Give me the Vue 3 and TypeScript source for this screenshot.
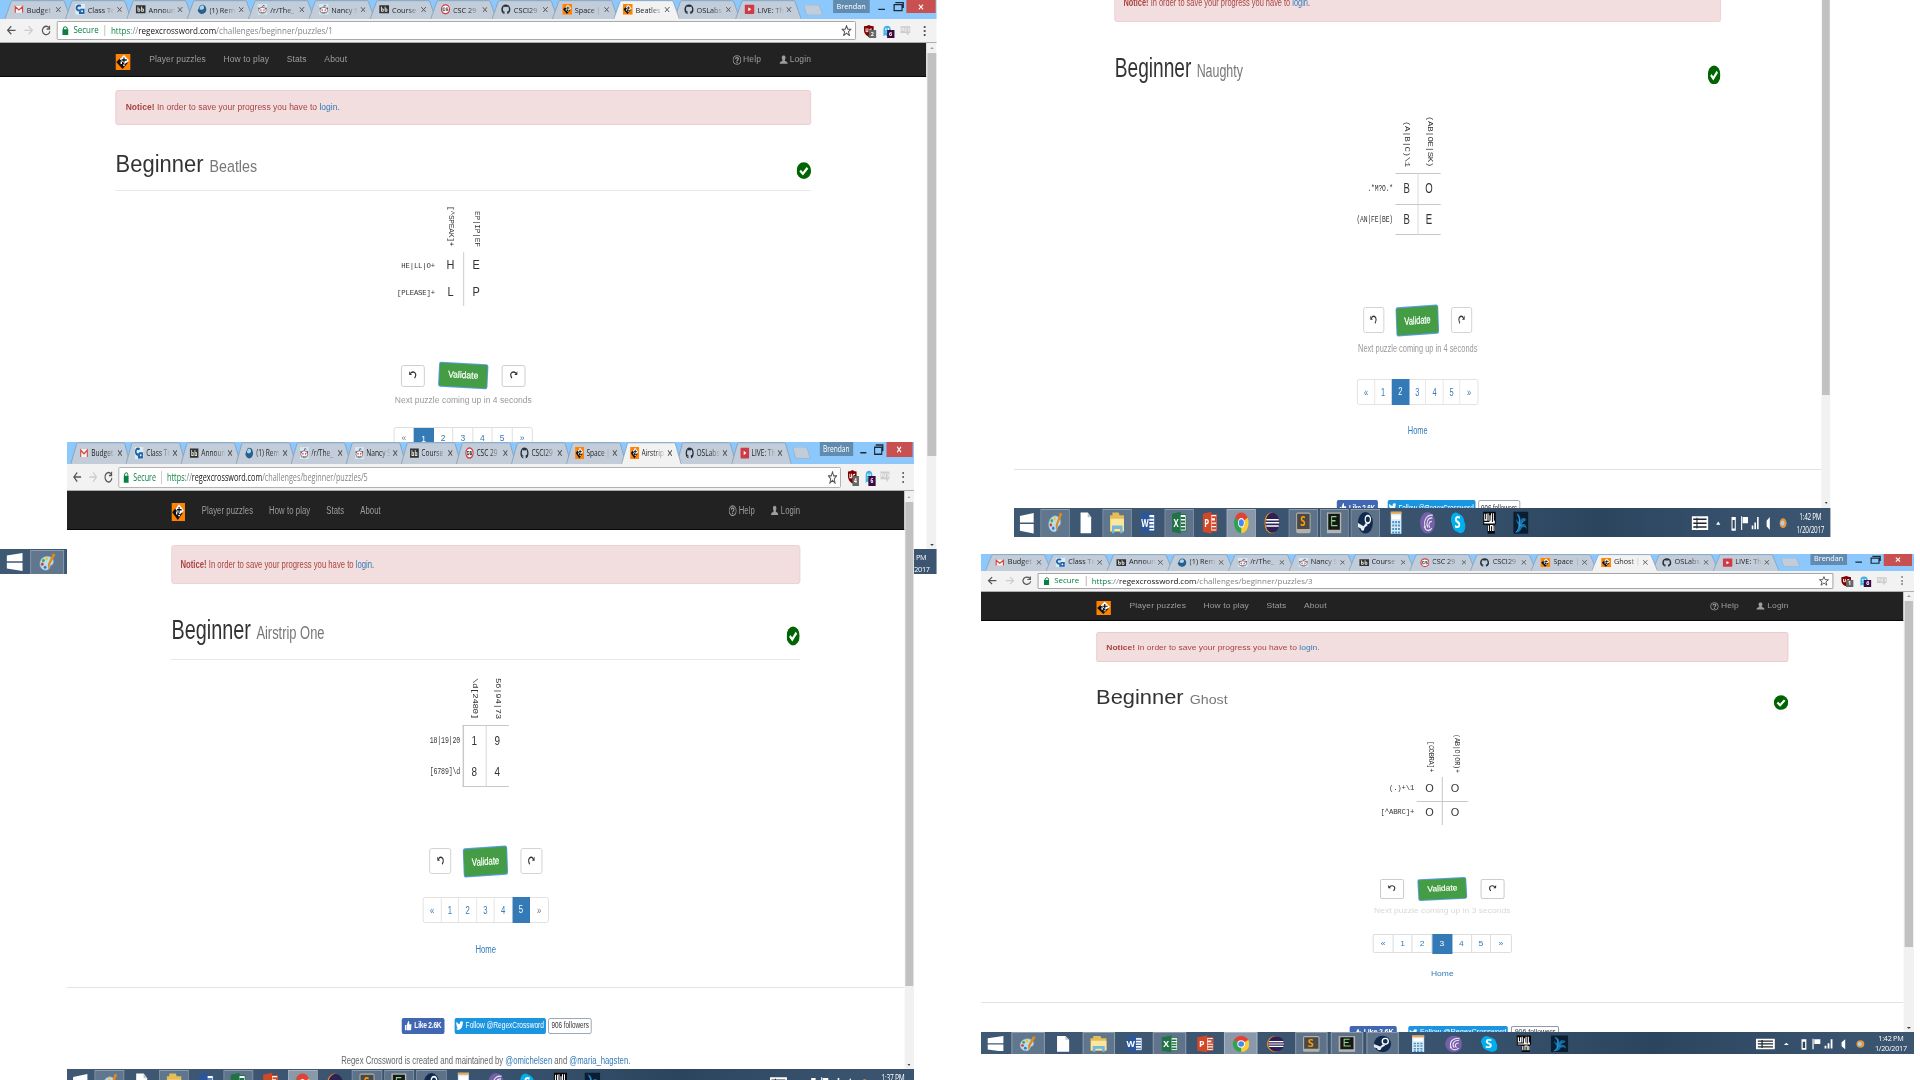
<script setup lang="ts">
interface Shot {
  id: string
  left: number
  top: number
  width: number
  height: number
  shift: number
  sx: number
  sy: number
  name: string
  tab: string
  page: number
  cols: string[]
  rows: string[]
  cells: string[][]
  lines: string[]
  rule: boolean
  seconds: number | null
  faded: boolean
  tilt: number
  thumb: number
  badge: string
  time: string
}

const shots: Shot[] = [
  {
    id: 'beatles', left: 0, top: 0, width: 937, height: 574, shift: 0, sx: 0.61, sy: 0.6663,
    name: 'Beatles', tab: 'Beatles', page: 1,
    cols: ['[^SPEAK]+', 'EP|IP|EF'], rows: ['HE|LL|O+', '[PLEASE]+'],
    cells: [['H', 'E'], ['L', 'P']], lines: ['mv'], rule: true, seconds: 4, faded: false,
    tilt: 3, thumb: 604, badge: '2', time: '1:42 PM',
  },
  {
    id: 'airstrip', left: 67, top: 442, width: 847, height: 638, shift: 0, sx: 0.5514, sy: 0.761,
    name: 'Airstrip One', tab: 'Airstrip', page: 5,
    cols: ['\\d[2480]', '56|94|73'], rows: ['18|19|20', '[6789]\\d'],
    cells: [['1', '9'], ['8', '4']], lines: ['mv', 'lv', 'th', 'bh'], rule: true, seconds: null, faded: false,
    tilt: -3, thumb: 635, badge: '4', time: '1:37 PM',
  },
  {
    id: 'naughty', left: 1014, top: 0, width: 817, height: 537, shift: -120.3, sx: 0.5316, sy: 0.7625,
    name: 'Naughty', tab: 'Naughty', page: 2,
    cols: ['(A|B|C)\\1', '(AB|OE|SK)'], rows: ['.*M?O.*', '(AN|FE|BE)'],
    cells: [['B', 'O'], ['B', 'E']], lines: ['mv', 'th', 'mh', 'bh'], rule: false, seconds: 4, faded: false,
    tilt: -3, thumb: 596, badge: '2', time: '1:42 PM',
  },
  {
    id: 'ghost', left: 981, top: 554, width: 933, height: 500, shift: 0, sx: 0.6074, sy: 0.58,
    name: 'Ghost', tab: 'Ghost |', page: 3,
    cols: ['[COBRA]+', '(AB|O|OR)+'], rows: ['(.)+\\1', '[^ABRC]+'],
    cells: [['O', 'O'], ['O', 'O']], lines: ['mv', 'mh'], rule: false, seconds: 3, faded: true,
    tilt: -3, thumb: 596, badge: '1', time: '1:42 PM',
  },
]

const tabsFor = (s: Shot) => [
  { icon: 'gmail', label: 'Budget' },
  { icon: 'ca', label: 'Class To' },
  { icon: 'bb', label: 'Announ' },
  { icon: 'globe', label: '(1) Rem' },
  { icon: 'reddit', label: '/r/The_' },
  { icon: 'reddit', label: 'Nancy S' },
  { icon: 'bb', label: 'Course' },
  { icon: 'cs', label: 'CSC 29' },
  { icon: 'github', label: 'CSCI29' },
  { icon: 'regex', label: 'Space |' },
  { icon: 'regex', label: s.tab, active: true },
  { icon: 'github', label: 'OSLabs' },
  { icon: 'youtube', label: 'LIVE: Th' },
]

const apps = [
  { icon: 'paint', open: true }, { icon: 'file' }, { icon: 'folder', open: true }, { icon: 'word' },
  { icon: 'excel', open: true }, { icon: 'ppt' }, { icon: 'chrome', open: true, focus: true }, { icon: 'eclipse' },
  { icon: 'sublime', open: true }, { icon: 'term', open: true }, { icon: 'steam', open: true }, { icon: 'calc' },
  { icon: 'torrent' }, { icon: 'skype' }, { icon: 'pixel' }, { icon: 'bird' },
] as { icon: string; open?: boolean; focus?: boolean }[]

const clueSpace = (s: Shot) => Math.max(...s.cols.map(c => c.length)) * 6.6
</script>

<template>
  <main class="board">
    <svg width="0" height="0" class="defs">
      <symbol id="gmail" viewBox="0 0 16 16"><path fill="#f4f4f4" d="M1 3h14v10H1z" /><path fill="none" stroke="#d8453a" stroke-width="2" d="M2 13V4l6 5 6-5v9" /></symbol>
      <symbol id="ca" viewBox="0 0 16 16"><path fill="#dcebf8" d="M0 0h16v16H0z" /><path fill="none" stroke="#1d62a8" stroke-width="3" d="M9 3C5 1 2 3 2 6s3 5 6 3" /><path fill="#1d62a8" d="M8 7h7v8H6v-4h2z" /><circle cx="11" cy="11" r="1.5" fill="#fff" /></symbol>
      <symbol id="bb" viewBox="0 0 16 16"><path fill="#2c3338" d="M0 2h16v12H0z" /><path fill="none" stroke="#e8e0c8" stroke-width="1.5" d="M3.500 4v7h3V7.500h-3M9.500 4v7h3V7.500h-3" /></symbol>
      <symbol id="globe" viewBox="0 0 16 16"><path fill="#2a5f8c" d="M8 1c5 0 7 4 7 7 0 5-4 7-7 7S1 12 1 9c2-1 2-8 7-8z" /><path fill="#a7d4ee" d="M8 2c3 0 4 3 3 5-2 2-6 2-7 0 0-3 2-5 4-5z" /></symbol>
      <symbol id="reddit" viewBox="0 0 16 16"><path fill="#d5e6f5" d="M0 0h16v16H0z" /><ellipse cx="8" cy="9.500" rx="6.300" ry="4.500" fill="#fff" stroke="#444" /><circle cx="5.500" cy="9" r="1.300" fill="#f33" /><circle cx="10.500" cy="9" r="1.300" fill="#f33" /><path fill="none" stroke="#444" d="M5 12q3 1.500 6 0M8 5l1-3 3 1" /><circle cx="2" cy="6.500" r="1.200" fill="#555" /><circle cx="14" cy="6.500" r="1.200" fill="#555" /></symbol>
      <symbol id="cs" viewBox="0 0 16 16"><circle cx="8" cy="8" r="6.600" fill="#fff" stroke="#d43c47" stroke-width="2" /><path fill="none" stroke="#555" stroke-width="1.500" d="M7 6H4v4h3V8M12 6H9v2h3v2H9" /></symbol>
      <symbol id="github" viewBox="0 0 16 16"><path fill="#24303c" d="M8 .6a7.500 7.500 0 0 0-2.400 14.600V13c-2 .4-2.500-1-2.500-1 1 0 1.200 1 2.600.7.100-.6.300-.9.600-1.200-1.700-.3-3.300-1-3.300-3.800 0-.8.300-1.500.8-2-.1-.3-.3-1 .1-2 0 0 .7-.2 2.100.8a7 7 0 0 1 4 0c1.400-1 2-.8 2-.8.500 1 .2 1.700.1 2 .5.500.8 1.200.8 2 0 2.800-1.700 3.500-3.300 3.700.3.300.5.700.5 1.500v2.300A7.500 7.500 0 0 0 8 .6z" /></symbol>
      <symbol id="regex" viewBox="0 0 16 16"><path fill="#ff8200" d="M0 0h16v16H0z" /><path fill="#111" d="M6.500 3 13 9l-5.500 6L1 8z" /><path fill="#fff" d="m9 1 5.500 5.500L10 10 4.500 5z" /><path fill="none" stroke="#111" stroke-width="1.300" d="M9 3.500v5M6.500 6h5.500" /><path fill="#fff" d="M5.500 7.500H7V10H5.500zM8 10.500h2v1.200H8z" /></symbol>
      <symbol id="youtube" viewBox="0 0 16 16"><rect y="1" width="16" height="14" rx="1.500" fill="#cf3a45" /><path fill="#fff" d="m6 5 5 3-5 3z" /></symbol>
      <symbol id="shield" viewBox="0 0 18 18"><path fill="#800000" d="M9 0q4 2 8 2v6c0 5-4 8-8 10-4-2-8-5-8-10V2q4 0 8-2z" /><path fill="none" stroke="#fff" stroke-width="1.500" d="M4.500 5v5h3V5M14 6q-4-1-4 3 0 2 3 2V9" /></symbol>
      <symbol id="ghostie" viewBox="0 0 18 18"><path fill="#40b4e5" d="M3 17V7a6 6 0 0 1 12 0v10l-3-2-3 2-3-2z" /><path fill="#fff" d="M6 5h2v3H6zM10 5h2v3h-2zM6 10h6v1H6z" /></symbol>
      <symbol id="chat" viewBox="0 0 18 18"><path fill="#ccc" d="M1 2h16v10h-3v4l-4-4H1z" /><path stroke="#fff" fill="none" d="M3 9V5h3v4M8 5h3L8 9h3M13 5h2v4h-2" /></symbol>
      <symbol id="undo" viewBox="0 0 16 16"><path fill="none" stroke="#333" stroke-width="2" d="M4 5q4-3 7-1c3 2 2 6 0 9" /><path fill="#333" d="M1.500 2v6h5z" /></symbol>
      <symbol id="tick" viewBox="0 0 24 24"><circle cx="12" cy="12" r="12" fill="#006400" /><path fill="none" stroke="#fff" stroke-width="3.600" d="m6 12 4.500 4.500L18 8" /></symbol>
      <symbol id="help" viewBox="0 0 16 16"><circle cx="8" cy="8" r="6.800" fill="none" stroke="#9d9d9d" stroke-width="1.500" /><path fill="none" stroke="#9d9d9d" stroke-width="2" d="M5.500 6.500C5.500 3.500 10.500 3.500 10.500 6.200 10.500 8 8 8 8 10M8 11v2" /></symbol>
      <symbol id="user" viewBox="0 0 16 16"><path fill="#9d9d9d" d="M8 1c4 0 4 4 2 7.500 0 2 5 1.500 5 5.500H1c0-4 5-3.500 5-5.500C4 5 4 1 8 1z" /></symbol>
      <symbol id="paint" viewBox="0 0 32 32"><path fill="#b9dcee" stroke="#7ba7c1" d="M14 6c9-1 15 5 13 11-1 4-5 3-6 6-1 4-4 7-9 6C5 28 1 22 3 15c1-5 6-8 11-9z" /><circle cx="9" cy="13" r="2.500" fill="#43a643" /><circle cx="15" cy="10" r="2.500" fill="#f4c22b" /><circle cx="7" cy="19" r="2.500" fill="#d93c31" /><circle cx="12" cy="24" r="2.500" fill="#3a74c4" /><path fill="#e08a1e" d="m26 1 5 2-9 15-4 11-1-10z" /></symbol>
      <symbol id="file" viewBox="0 0 32 32"><path fill="#fff" d="M5 1h15l7 7v23H5z" /><path fill="#bcc4cc" d="M20 1v7h7z" /></symbol>
      <symbol id="folder" viewBox="0 0 32 32"><path fill="#e4bd57" d="M1 5h5V1h13l2 4h9v24H1z" /><path fill="#fbe8a0" d="M2 10h28v18H2z" /><path fill="#75b8dc" d="M5 20h22v11h-5v-6H10v6H5z" /></symbol>
      <symbol id="word" viewBox="0 0 32 32"><path fill="#fff" stroke="#2b579a" stroke-width="1.500" d="M16 4h14v24H16z" /><path stroke="#2b579a" stroke-width="2" d="M18 9h10M18 14h10M18 19h10M18 24h10" /><path fill="#2b579a" d="M1 3 19 0v32L1 29z" /><text x="2" y="22" class="glyph" fill="#fff">W</text></symbol>
      <symbol id="excel" viewBox="0 0 32 32"><path fill="#fff" stroke="#217346" stroke-width="1.500" d="M16 4h14v24H16z" /><path stroke="#217346" stroke-width="3" d="M19 9h9M19 14h9M19 19h9M19 24h9" /><path fill="#217346" d="M1 3 19 0v32L1 29z" /><text x="4" y="22" class="glyph" fill="#fff">X</text></symbol>
      <symbol id="ppt" viewBox="0 0 32 32"><path fill="#fff" stroke="#d24726" stroke-width="1.500" d="M16 4h14v24H16z" /><path stroke="#d24726" stroke-width="3" d="M20 8h8v6h-8M20 19h9M20 24h9" fill="none" /><path fill="#d24726" d="M1 3 19 0v32L1 29z" /><text x="4" y="22" class="glyph" fill="#fff">P</text></symbol>
      <symbol id="chrome" viewBox="0 0 32 32"><path fill="#e34133" d="M16 16 3 8.500A15 15 0 0 1 29 8.500z" /><path fill="#2fa24f" d="M16 16v15A15 15 0 0 1 3 8.500z" /><path fill="#fccd32" d="M16 16 29 8.500A15 15 0 0 1 16 31z" /><circle cx="16" cy="16" r="7" fill="#fff" /><circle cx="16" cy="16" r="5.300" fill="#4886f0" /></symbol>
      <symbol id="eclipse" viewBox="0 0 32 32"><circle cx="15" cy="16" r="15" fill="#ee8d22" /><circle cx="17" cy="16" r="14.500" fill="#2c2255" /><path stroke="#fff" stroke-width="2.300" d="M4 11.500h26M3 16h28M4 20.500h26" /></symbol>
      <symbol id="sublime" viewBox="0 0 32 32"><rect x="1" y="1" width="30" height="30" rx="3" fill="#b3b2a9" /><path fill="#494949" d="M3 3h26v22H3z" /><text x="9.500" y="21" class="glyph big" fill="#ff9800">S</text></symbol>
      <symbol id="term" viewBox="0 0 32 32"><rect x="1" y="1" width="30" height="30" fill="#b4b4b0" /><path fill="#151815" d="M4 3h24v23H4z" /><path fill="none" stroke="#8ed58c" stroke-width="2" d="M21 7H11v13h12M12 13h7" /></symbol>
      <symbol id="steam" viewBox="0 0 32 32"><circle cx="16" cy="16" r="15.500" fill="#102b4e" /><circle cx="21" cy="11" r="5.500" fill="none" stroke="#fff" stroke-width="2.500" /><path fill="#e9eef4" d="m0 16 12 5 5-5 4 3-7 4c0 6-7 6-8 1l-6-2z" /></symbol>
      <symbol id="calc" viewBox="0 0 32 32"><path fill="#d8ebf6" d="M5 0h22v32H5z" /><path fill="#eda44c" d="M5 0h22v3H5z" /><path fill="#fff" d="M7 5h18v6H7z" /><path stroke="#4b92c9" stroke-width="3" stroke-dasharray="4 2" d="M8 15h16M8 20h16M8 25h16M8 30h16" /></symbol>
      <symbol id="torrent" viewBox="0 0 32 32"><circle cx="16" cy="16" r="15.500" fill="#7661a8" /><path fill="none" stroke="#eee8fa" stroke-width="2" d="M27 5C12 4 7 15 12 23M26 9C16 8 12 17 17 23M25 14c-6 0-8 5-4 9M9 21c3 7 11 8 16 3" /></symbol>
      <symbol id="skype" viewBox="0 0 32 32"><circle cx="11" cy="11" r="10" fill="#00aff0" /><circle cx="21" cy="21" r="10" fill="#00aff0" /><circle cx="16" cy="16" r="13" fill="#00aff0" /><text x="8.500" y="24" class="glyph skype" fill="#fff">S</text></symbol>
      <symbol id="pixel" viewBox="0 0 32 32"><path fill="#080808" d="M3 0h26v18h-2v14H12V19H3z" /><path fill="none" stroke="#fff" stroke-width="2" d="M6 3v9h4V3M13 2v11M17 5v9h3V2M24 2v12h3M5 16h22M14 20v8M18 28v-8h4v8M25 20v8" /></symbol>
      <symbol id="bird" viewBox="0 0 32 32"><path fill="#0b1d31" d="M0 0h32v32H0z" /><path fill="#1272ae" d="M7 2c7 2 9 6 8 11 4-6 8-4 13-2-6 0-8 4-12 7 6-1 11-1 12 7-4-4-7-3-10-2-3 6-8 7-14 7 5-3 8-7 6-12-2-3-4-4-4-8 2 3 4 4 6 4 0-5-2-8-5-12z" /><path fill="none" stroke="#4db8ef" d="M8 4c6 4 5 8 5 14s-3 9-7 11M26 12c-6 1-8 5-12 9" /></symbol>
    </svg>

    <section
      v-for="s in shots" :key="s.id" class="shot" :class="s.id"
      :style="{ left: s.left + 'px', top: s.top + 'px', width: s.width + 'px', height: s.height + 'px' }"
    >
      <div class="stage" :style="{ zoom: s.sy, transform: `scaleX(${s.sx / s.sy})`, marginTop: s.shift / s.sy + 'px' }">
        <header class="strip">
          <div v-for="(t, i) in tabsFor(s)" :key="i" class="tab" :class="{ active: t.active }">
            <svg class="shape" viewBox="0 0 109 29"><path d="M0 30 11 2Q12 1 14 1H95Q97 1 98 2L109 30" /></svg>
            <svg class="fav"><use :href="'#' + t.icon" /></svg>
            <span class="label">{{ t.label }}</span>
            <svg class="x" viewBox="0 0 8 8"><path d="m0 0 8 8M8 0 0 8" /></svg>
          </div>
          <svg class="newtab" viewBox="0 0 32 16"><path d="M0 1q0-1 2-1h23l6 15H7q-2 0-3-2z" /></svg>
          <span class="profile">Brendan</span>
          <svg class="winbtn" viewBox="0 0 50 20"><path d="M5 14h11M31 7h13v9H31zM33 4h13v8" /></svg>
          <span class="close"><svg viewBox="0 0 10 10"><path d="m1 1 8 8M9 1 1 9" /></svg></span>
        </header>

        <div class="toolbar">
          <svg class="arrow" viewBox="0 0 16 16"><path d="M15 8H2M8 2 2 8l6 6" /></svg>
          <svg class="arrow off" viewBox="0 0 16 16"><path d="M1 8h13M8 2l6 6-6 6" /></svg>
          <svg class="arrow" viewBox="0 0 16 16"><path d="M13 4a6.300 6.300 0 1 0 1.500 5M14 1v5H9" /></svg>
          <div class="omni">
            <svg class="lock" viewBox="0 0 10 14"><path fill="#0b8043" d="M0 5h10v9H0z" /><path fill="none" stroke="#0b8043" stroke-width="1.600" d="M2 6V3q3-4 6 0v3" /></svg>
            <span class="secure">Secure</span>
            <span class="url"><i>https</i>://<b>regexcrossword.com</b>/challenges/beginner/puzzles/{{ s.page }}</span>
            <svg class="star" viewBox="0 0 16 16"><path d="m8 1 2 5h5l-4 3.500L12.500 15 8 11.500 3.500 15 5 9.500 1 6h5z" /></svg>
          </div>
          <span class="ext"><svg><use href="#shield" /></svg><em>{{ s.badge }}</em></span>
          <span class="ext"><svg><use href="#ghostie" /></svg><em class="plum">6</em></span>
          <span class="ext"><svg><use href="#chat" /></svg></span>
          <span class="dots"><i /><i /><i /></span>
        </div>

        <div class="view">
          <div class="page">
            <nav class="navbar">
              <div class="container">
                <svg class="logo" viewBox="0 0 16 16" preserveAspectRatio="none"><use href="#regex" width="16" height="16" /></svg>
                <a>Player puzzles</a><a>How to play</a><a>Stats</a><a>About</a>
                <span class="grow" />
                <a class="right"><svg><use href="#help" /></svg>Help</a>
                <a class="right last"><svg><use href="#user" /></svg>Login</a>
              </div>
            </nav>
            <div class="container column">
              <div class="alert"><strong>Notice!</strong> In order to save your progress you have to <a>login</a>.</div>
              <div class="head" :class="{ ruled: s.rule }">
                <h1>Beginner <small>{{ s.name }}</small></h1>
                <svg class="done" viewBox="0 0 24 25" preserveAspectRatio="none"><use href="#tick" width="24" height="25" /></svg>
              </div>
              <div class="puzzle">
                <div class="colclues" :style="{ height: clueSpace(s) + 32 + 'px' }">
                  <span v-for="c in s.cols" :key="c">{{ c }}</span>
                </div>
                <div class="rowclues"><span v-for="r in s.rows" :key="r">{{ r }}</span></div>
                <div class="cells">
                  <template v-for="(row, i) in s.cells" :key="i"><span v-for="(c, j) in row" :key="j">{{ c }}</span></template>
                  <i v-for="l in s.lines" :key="l" class="line" :class="l" />
                </div>
              </div>
              <div class="controls" :style="{ marginTop: clueSpace(s) + 28 + 'px' }">
                <span class="btn"><svg><use href="#undo" /></svg></span>
                <span class="validate" :style="{ transform: `rotate(${s.tilt}deg)` }">Validate</span>
                <span class="btn"><svg class="flip"><use href="#undo" /></svg></span>
              </div>
              <p v-if="s.seconds" class="next" :class="{ faded: s.faded }">Next puzzle coming up in {{ s.seconds }} seconds</p>
              <div class="pager">
                <span :class="{ off: s.page === 1 }">«</span>
                <span v-for="n in 5" :key="n" :class="{ on: n === s.page }">{{ n }}</span>
                <span :class="{ off: s.page === 5 }">»</span>
              </div>
              <a class="home">Home</a>
            </div>
            <footer class="foot">
              <div class="social">
                <span class="fb"><svg viewBox="0 0 14 14"><path fill="#fff" d="M0 6h3v8H0zM4 6l3-6q3 0 2 5h5l-1 9H4z" /></svg>Like 2.6K</span>
                <span class="tw"><svg viewBox="0 0 16 14"><path fill="#fff" d="M1 1q3 4 7 4Q8 0 12 0l2 1 2-1-1 3q-1 11-10 11-3 0-5-2 3 0 4-1-3-1-3-3l1 0Q-1 5 1 1z" /></svg>Follow @RegexCrossword</span>
                <span class="fol">906 followers</span>
              </div>
              <p>Regex Crossword is created and maintained by <a>@omichelsen</a> and <a>@maria_hagsten</a>.</p>
            </footer>
          </div>
          <div class="scroll">
            <i class="up" /><div class="thumb" :style="{ height: s.thumb + 'px' }" /><span class="grow" /><i class="down" />
          </div>
        </div>

        <div class="taskbar">
          <svg class="start" viewBox="0 0 28 28"><path fill="#fff" d="M0 4 27 0v13H0zM0 15h27v13L0 24z" /></svg>
          <span v-for="a in apps" :key="a.icon" class="app" :class="{ open: a.open, focus: a.focus }"><svg><use :href="'#' + a.icon" /></svg></span>
          <span class="grow" />
          <svg class="tray" viewBox="0 0 180 24">
            <path fill="#fff" d="M0 3h31v18H0z" /><path stroke="#1c2630" stroke-width="2" d="M3 7h25M3 12h25M3 17h25M10 5v14" />
            <path fill="#fff" d="m46 14 4-4 4 4zM75 4h8v18h-8zM93 3h2v18h-2zM96 4h10v8H96zM113 20h3v-5h-3zM118 20h3v-9h-3zM123 20h3V4h-3zM141 9l6-5v17l-6-5z" />
            <path fill="#30445a" d="M77 8h4v11h-4z" /><circle cx="172" cy="12" r="6.500" fill="#e6953c" /><circle cx="171" cy="12" r="3.500" fill="#a8d3ef" />
          </svg>
          <span class="clock"><span>{{ s.time }}</span><span>1/20/2017</span></span>
        </div>
      </div>
    </section>
  </main>
</template>

<style>
html, body { margin: 0; background: #fff; overflow: hidden; }
</style>

<style scoped>
.board { position: relative; width: 1920px; height: 1080px; overflow: hidden; background: #fff; font-family: "Liberation Sans", Arial, sans-serif; }
.defs { position: absolute; }
.glyph { font: bold 16px "Open Sans", sans-serif; }
.glyph.big { font-size: 20px; }
.glyph.skype { font-size: 23px; }
.shot { position: absolute; overflow: hidden; background: #fff; }
.stage { width: 1536px; height: 864px; transform-origin: 0 0; display: flex; flex-direction: column; font-size: 14px; line-height: 20px; color: #333; background: #fff; }
.grow { flex: 1; }
a { color: #337ab7; }

.strip { height: 29px; flex: none; background: #8cc8fc; display: flex; padding-left: 7px; font: 12px/29px "Open Sans", sans-serif; overflow: hidden; }
.tab { position: relative; width: 109px; height: 29px; margin-right: -9.200px; flex: none; display: flex; align-items: center; box-sizing: border-box; padding-left: 16px; }
.shape { position: absolute; left: 0; top: 0; width: 109px; height: 29px; }
.shape path { fill: #c2cdd9; stroke: #7f9bb5; stroke-width: 1.200; }
.tab.active { z-index: 1; }
.active .shape path { fill: #f2f2f2; }
.fav { position: relative; width: 17px; height: 16px; }
.label { position: relative; width: 44px; margin-left: 4px; overflow: hidden; white-space: nowrap; color: #222; mask-image: linear-gradient(90deg, #000 55%, transparent); }
.x { position: relative; width: 8px; height: 8px; margin-left: 4px; stroke: #555; stroke-width: 1.500; }
.newtab { width: 32px; height: 16px; margin: 7px 0 0 13px; flex: none; }
.newtab path { fill: #c2cdd9; stroke: #8fb0cb; }
.profile { width: 60px; height: 19px; margin-left: 16px; background: #618cb0; color: #fff; text-align: center; line-height: 18px; flex: none; }
.winbtn { width: 50px; height: 20px; margin-left: 9px; flex: none; }
.winbtn path { fill: none; stroke: #1c2a38; stroke-width: 2; }
.close { width: 47px; height: 20px; margin-left: 2px; background: #c85051; display: flex; justify-content: center; align-items: center; flex: none; }
.close svg { width: 9px; height: 9px; stroke: #fff; stroke-width: 2; }

.toolbar { height: 36px; flex: none; box-sizing: border-box; background: #f2f2f2; border-bottom: 1px solid #adadad; display: flex; align-items: center; padding-left: 11px; font-family: "Open Sans", sans-serif; }
.arrow { width: 16px; height: 16px; margin-right: 12px; flex: none; fill: none; stroke: #555; stroke-width: 2; }
.arrow.off { stroke: #ccc; }
.omni { width: 1310px; height: 28px; flex: none; box-sizing: border-box; border: 1px solid #a5a5a5; border-radius: 2px; background: #fff; display: flex; align-items: center; padding: 0 5px 0 8px; margin-left: -2px; }
.lock { width: 10px; height: 14px; }
.secure { width: 51px; margin-left: 8px; color: #0b8043; font-size: 13px; border-right: 1px solid #bbb; line-height: 17px; }
.url { flex: 1; margin-left: 9px; color: #80868b; font-size: 13.200px; letter-spacing: -0.020px; line-height: 22px; padding-top: 1px; }
.url i { font-style: normal; color: #0b8043; }
.url b { font-weight: normal; color: #111; }
.star { width: 17px; height: 17px; fill: none; stroke: #555; stroke-width: 1.500; }
.ext { position: relative; width: 18px; height: 18px; margin-left: 12px; }
.ext svg { display: block; width: 18px; height: 18px; }
.ext em { position: absolute; left: 9px; top: 8px; width: 12px; height: 12px; background: #666; color: #fff; font: bold 9px/12px "Open Sans", sans-serif; text-align: center; }
.ext em.plum { background: #3a0a42; }
.dots { margin-left: 22px; display: flex; flex-direction: column; gap: 3px; }
.dots i { width: 3px; height: 3px; background: #555; }

.view { height: 759px; flex: none; display: flex; overflow: hidden; }
.page { width: 1519px; height: 100%; overflow: hidden; }
.scroll { width: 17px; height: 100%; background: #f1f1f1; display: flex; flex-direction: column; align-items: center; }
.up, .down { width: 0; height: 0; border: 3.500px solid transparent; }
.up { border-bottom-color: #a0a0a0; margin: 3px 0 6px; }
.down { border-top-color: #444; margin-bottom: 2px; }
.thumb { width: 15px; flex: none; background: #c1c1c1; }
.navbar { height: 51px; box-sizing: border-box; background: #222; border-bottom: 1px solid #080808; }
.container { width: 1140px; margin: 0 auto; display: flex; }
.navbar .container { height: 50px; align-items: center; }
.logo { width: 25px; height: 24px; margin: 5px 15px 0 0; }
.navbar a { color: #9d9d9d; padding: 0 14px 0 15px; letter-spacing: 0.150px; }
.navbar a.right { display: flex; align-items: center; gap: 3px; }
.navbar a.last { padding-right: 0; }
.right svg { width: 15px; height: 15px; }
.container.column { flex-direction: column; align-items: center; }
.alert { width: 100%; height: 52px; box-sizing: border-box; margin-top: 19px; padding: 15px; border: 1px solid #ebccd1; border-radius: 4px; background: #f2dede; color: #a94442; letter-spacing: 0; }
.head { width: 100%; height: 59.600px; box-sizing: border-box; margin-top: 40px; border-bottom: 1px solid transparent; display: flex; justify-content: space-between; }
.head.ruled { border-color: #e8e8e8; }
h1 { margin: 0; font-size: 36px; line-height: 39.600px; font-weight: 500; color: #333; }
small { font-size: 23.400px; font-weight: 400; color: #777; }
.done { width: 24px; height: 26px; margin-top: 15.500px; }

.puzzle { width: 100%; display: grid; grid-template-columns: 1fr 84px 1fr; margin-left: 1px; }
.colclues { grid-column: 2; display: flex; box-sizing: border-box; padding-bottom: 8px; align-items: flex-end; }
.colclues span { width: 42px; writing-mode: vertical-rl; text-align: right; white-space: pre; font: 12px/41px "Liberation Mono", monospace; letter-spacing: -0.500px; }
.rowclues { grid-column: 1; display: flex; flex-direction: column; align-items: flex-end; padding-right: 5px; font: 12px/41px "Liberation Mono", monospace; letter-spacing: -0.300px; }
.cells { position: relative; width: 84px; height: 82px; display: grid; grid-template: 41px 41px / 42px 42px; text-align: center; font-size: 18px; line-height: 41px; }
.cells span { margin-left: -1px; }
.line { position: absolute; background: #c8c8c8; }
.mv, .lv { top: 0; width: 1.700px; height: 100%; }
.th, .mh, .bh { left: 0; height: 1.400px; width: 100%; }
.mv { left: 41px; }
.lv { left: 0; }
.th { top: 0; }
.mh { top: 40.500px; }
.bh { bottom: 0; }

.controls { display: flex; align-items: center; gap: 24px; height: 34px; }
.btn { width: 39px; height: 34px; box-sizing: border-box; border: 1px solid #ccc; border-radius: 4px; display: flex; align-items: center; justify-content: center; }
.btn svg { width: 15px; height: 15px; margin-bottom: 2px; }
.flip { transform: scaleX(-1); }
.validate { width: 78px; height: 35px; background: #449d44; border-radius: 2px; box-shadow: 0 0 1px 1.500px #5b9bea; color: #fff; text-align: center; line-height: 35px; -webkit-text-stroke: 0.300px #fff; }
.next { margin: 10px 0 0; color: #999; letter-spacing: 0.020px; }
.next.faded { color: #d8d8d8; }
.pager { margin-top: 30px; display: flex; height: 34px; box-sizing: border-box; border: 1px solid #ddd; border-radius: 4px; color: #337ab7; }
.pager span { width: 32.200px; height: 32px; line-height: 32px; text-align: center; box-sizing: border-box; border-right: 1px solid #ddd; }
.pager span:last-child { border-right: 0; }
.pager span.off { color: #777; }
.pager span.on { background: #337ab7; color: #fff; margin: -1px 0; height: 34px; line-height: 34px; border-color: #337ab7; }
.home { margin-top: 24.500px; }
.foot { margin-top: 40px; border-top: 1px solid #e2e2e2; padding-top: 39px; display: flex; flex-direction: column; align-items: center; }
.beatles .foot { border-color: transparent; }
.social { display: flex; height: 21px; font: 11px/21px "Liberation Sans", sans-serif; margin-left: 40px; }
.social span { border-radius: 3px; color: #fff; display: flex; align-items: center; justify-content: center; gap: 4px; box-sizing: border-box; white-space: nowrap; }
.fb { width: 78px; background: #4267b2; font-size: 12px; font-weight: bold; letter-spacing: -0.400px; }
.fb svg, .tw svg { width: 13px; height: 12px; flex: none; }
.tw { width: 165px; background: #1b95e0; margin-left: 18px; font-size: 12px; }
.social .fol { width: 79px; margin-left: 5px; border: 1px solid #8a9bab; color: #333; font-size: 11.500px; }
.foot p { margin: 25px 0 0; color: #666; }

.taskbar { height: 40px; flex: none; background: linear-gradient(90deg, #3f5975, #39536e 50%, #2c455f 72%, #38516c 90%, #3c5570); display: flex; align-items: center; box-sizing: border-box; }
.start { width: 28px; height: 27px; margin: 0 12px 0 10px; }
.app { width: 54.400px; height: 38px; margin-right: 4px; display: flex; align-items: center; justify-content: center; box-sizing: border-box; }
.app svg { width: 29px; height: 31px; }
.app.open { background: rgba(255, 255, 255, 0.180); border: 1px solid rgba(255, 255, 255, 0.280); }
.app.focus { background: rgba(255, 255, 255, 0.400); }
.tray { width: 180px; height: 24px; margin-right: 14px; }
.clock { width: 58px; margin-right: 9px; display: flex; flex-direction: column; align-items: center; font: 12px/17px "Open Sans", sans-serif; letter-spacing: -0.500px; color: #fff; padding-top: 1px; }
</style>
